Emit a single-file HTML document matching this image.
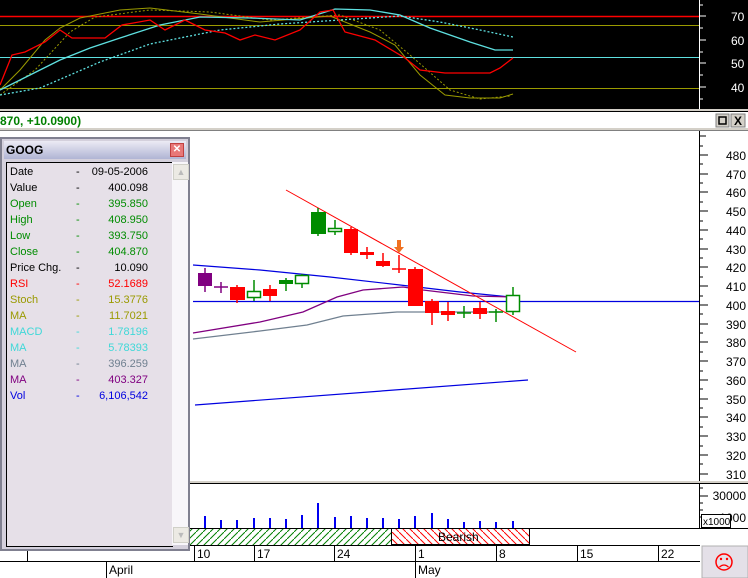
<!DOCTYPE html>
<html><head><meta charset="utf-8"><style>
body{margin:0;width:748px;height:578px;overflow:hidden;background:#fff;font-family:"Liberation Sans",sans-serif;}
svg{position:absolute;left:0;top:0}
#panel{position:absolute;left:0;top:137px;width:190px;height:414px;background:#d4d0dc;border:2px solid #808090;box-sizing:border-box}
#ttl{position:absolute;left:2px;top:2px;width:182px;height:18px;background:linear-gradient(#eceaf4,#b0b4d4);font:bold 12px "Liberation Sans",sans-serif;line-height:18px;padding-left:2px;box-sizing:border-box}
#cls{position:absolute;right:2px;top:2px;width:12px;height:12px;background:#e87878;border:1px solid #c04040;color:#fff;font:bold 10px sans-serif;text-align:center;line-height:12px}
#list{position:absolute;left:4px;top:23px;width:166px;height:383px;background:#e6e0e8;border:1px solid #000;border-right:none}
#sb{position:absolute;left:170px;top:23px;width:16px;height:383px;background:#f8f6fa}
.sbb{position:absolute;left:1px;width:14px;height:14px;background:#eceae4;border:1px solid #d0d0c8;color:#bbb;font-size:9px;text-align:center;line-height:14px}
.r{position:absolute;left:3px;width:160px;height:16px;font-size:11px;line-height:16px}
.r span{position:absolute}
.r .d{left:66px}.r .v{right:22px}
</style></head><body>
<svg width="748" height="578" viewBox="0 0 748 578" font-family="Liberation Sans, sans-serif">
<rect x="0" y="0" width="748" height="109" fill="#000"/>
<line x1="0" y1="16.5" x2="699" y2="16.5" stroke="#f00" stroke-width="1.5"/>
<line x1="0" y1="25.5" x2="699" y2="25.5" stroke="#9a9a00"/>
<line x1="0" y1="57.5" x2="699" y2="57.5" stroke="#5ee0e0"/>
<line x1="0" y1="88.5" x2="699" y2="88.5" stroke="#9a9a00"/>
<line x1="699.5" y1="0" x2="699.5" y2="109" stroke="#fff"/>
<g stroke="#fff"><line x1="699" y1="5" x2="703" y2="5"/><line x1="699" y1="16" x2="706" y2="16"/><line x1="699" y1="28" x2="703" y2="28"/><line x1="699" y1="40" x2="706" y2="40"/><line x1="699" y1="52" x2="703" y2="52"/><line x1="699" y1="63" x2="706" y2="63"/><line x1="699" y1="75" x2="703" y2="75"/><line x1="699" y1="87" x2="706" y2="87"/><line x1="699" y1="99" x2="703" y2="99"/></g>
<g fill="#fff" font-size="12"><text x="731" y="21">70</text><text x="731" y="45">60</text><text x="731" y="68">50</text><text x="731" y="92">40</text></g>
<polyline fill="none" stroke="#9a9a00" points="0,90 20,70 45,40 60,28 80,18 120,10 150,8 200,14 260,22 330,16 370,32 395,45 420,75 445,95 470,98 500,98 513,94"/>
<polyline fill="none" stroke="#9a9a00" stroke-dasharray="2,2" points="0,95 35,70 70,32 95,17 150,10 210,12 270,20 340,15 380,30 410,55 450,90 480,99 510,96"/>
<polyline fill="none" stroke="#5ee0e0" stroke-width="1.3" points="0,90 30,75 60,60 90,48 120,38 160,25 200,17 250,18 300,20 335,9 370,10 400,15 430,28 470,42 495,50 513,50"/>
<polyline fill="none" stroke="#5ee0e0" stroke-dasharray="2,2" stroke-width="1.3" points="0,95 40,88 100,62 150,44 220,30 280,24 340,20 400,16 440,22 480,30 513,37"/>
<polyline fill="none" stroke="#f00" stroke-width="1.3" points="0,85 12,55 25,52 45,42 60,30 72,38 105,38 122,25 150,20 165,30 185,20 205,30 225,33 240,40 255,35 275,40 300,30 320,12 333,10 345,32 375,40 405,58 420,70 445,73 490,73 500,68 513,58"/>
<rect x="0" y="109" width="748" height="2" fill="#d4d0c8"/>
<line x1="0" y1="111.5" x2="748" y2="111.5" stroke="#000"/>
<text x="0" y="125" font-size="12" font-weight="bold" fill="#008000">870, +10.0900)</text>
<rect x="716" y="114" width="13" height="13" fill="#d4d0c8" stroke="#808080"/><rect x="719" y="117" width="7" height="7" fill="none" stroke="#000" stroke-width="1.5"/>
<rect x="731" y="114" width="14" height="13" fill="#d4d0c8" stroke="#808080"/><text x="734" y="125" font-size="12" font-weight="bold">X</text>
<rect x="0" y="128" width="748" height="2" fill="#d4d0c8"/>
<line x1="0" y1="130.5" x2="748" y2="130.5" stroke="#808080"/>
<line x1="699.5" y1="131" x2="699.5" y2="528" stroke="#000"/>
<g stroke="#000">
<line x1="699" y1="136" x2="706" y2="136"/><line x1="699" y1="146" x2="703" y2="146"/><line x1="699" y1="155" x2="708" y2="155"/><line x1="699" y1="164" x2="703" y2="164"/><line x1="699" y1="174" x2="708" y2="174"/><line x1="699" y1="183" x2="703" y2="183"/><line x1="699" y1="192" x2="708" y2="192"/><line x1="699" y1="202" x2="703" y2="202"/><line x1="699" y1="211" x2="708" y2="211"/><line x1="699" y1="221" x2="703" y2="221"/><line x1="699" y1="230" x2="708" y2="230"/><line x1="699" y1="239" x2="703" y2="239"/><line x1="699" y1="249" x2="708" y2="249"/><line x1="699" y1="258" x2="703" y2="258"/><line x1="699" y1="267" x2="708" y2="267"/><line x1="699" y1="277" x2="703" y2="277"/><line x1="699" y1="286" x2="708" y2="286"/><line x1="699" y1="296" x2="703" y2="296"/><line x1="699" y1="305" x2="708" y2="305"/><line x1="699" y1="314" x2="703" y2="314"/><line x1="699" y1="324" x2="708" y2="324"/><line x1="699" y1="333" x2="703" y2="333"/><line x1="699" y1="342" x2="708" y2="342"/><line x1="699" y1="352" x2="703" y2="352"/><line x1="699" y1="361" x2="708" y2="361"/><line x1="699" y1="371" x2="703" y2="371"/><line x1="699" y1="380" x2="708" y2="380"/><line x1="699" y1="389" x2="703" y2="389"/><line x1="699" y1="399" x2="708" y2="399"/><line x1="699" y1="408" x2="703" y2="408"/><line x1="699" y1="417" x2="708" y2="417"/><line x1="699" y1="427" x2="703" y2="427"/><line x1="699" y1="436" x2="708" y2="436"/><line x1="699" y1="446" x2="703" y2="446"/><line x1="699" y1="455" x2="708" y2="455"/><line x1="699" y1="464" x2="703" y2="464"/><line x1="699" y1="474" x2="708" y2="474"/>
</g>
<g font-size="12" fill="#000" text-anchor="end">
<text x="746" y="160">480</text><text x="746" y="179">470</text><text x="746" y="197">460</text><text x="746" y="216">450</text><text x="746" y="235">440</text><text x="746" y="254">430</text><text x="746" y="272">420</text><text x="746" y="291">410</text><text x="746" y="310">400</text><text x="746" y="329">390</text><text x="746" y="347">380</text><text x="746" y="366">370</text><text x="746" y="385">360</text><text x="746" y="404">350</text><text x="746" y="422">340</text><text x="746" y="441">330</text><text x="746" y="460">320</text><text x="746" y="479">310</text>
</g>
<rect x="0" y="481" width="748" height="2" fill="#d4d0c8"/>
<line x1="0" y1="483.5" x2="748" y2="483.5" stroke="#000"/>
<line x1="193" y1="301.5" x2="699" y2="301.5" stroke="#0000e0" stroke-width="1.2"/>
<polyline fill="none" stroke="#0000e0" stroke-width="1.2" points="193,265 260,270 330,277 400,285 460,292 520,298"/>
<polyline fill="none" stroke="#0000e0" stroke-width="1.2" points="195,405 528,380"/>
<polyline fill="none" stroke="#800080" stroke-width="1.3" points="193,333 260,322 303,312 337,297 363,290 403,287 423,290 473,296 513,297"/>
<polyline fill="none" stroke="#708090" stroke-width="1.3" points="193,339 260,331 307,325 343,316 397,312 503,312"/>
<line x1="286" y1="190" x2="576" y2="352" stroke="#f00"/>
<g stroke-width="1.5">
<line x1="205" y1="268" x2="205" y2="292" stroke="#800080"/><rect x="198" y="273" width="14" height="13" fill="#800080"/>
<line x1="221" y1="282" x2="221" y2="293" stroke="#800080"/><line x1="214" y1="287" x2="228" y2="287" stroke="#800080"/>
<line x1="237" y1="285" x2="237" y2="303" stroke="#f00"/><rect x="230" y="287" width="15" height="13" fill="#f00"/>
<line x1="254" y1="280" x2="254" y2="301" stroke="#008c00"/><rect x="247.5" y="291.5" width="13" height="6" fill="#fff" stroke="#008c00"/>
<line x1="270" y1="285" x2="270" y2="301" stroke="#f00"/><rect x="263" y="289" width="14" height="7" fill="#f00"/>
<line x1="286" y1="278" x2="286" y2="291" stroke="#008c00"/><rect x="279" y="280" width="14" height="4" fill="#008c00"/>
<line x1="302" y1="274" x2="302" y2="288" stroke="#008c00"/><rect x="295.5" y="275.5" width="13" height="8" fill="#fff" stroke="#008c00"/>
<line x1="318" y1="208" x2="318" y2="236" stroke="#008c00"/><rect x="311" y="212" width="15" height="22" fill="#008c00"/>
<line x1="335" y1="220" x2="335" y2="235" stroke="#008c00"/><rect x="328.5" y="228.5" width="13" height="3" fill="#fff" stroke="#008c00"/>
<line x1="351" y1="227" x2="351" y2="255" stroke="#f00"/><rect x="344" y="229" width="14" height="24" fill="#f00"/>
<line x1="367" y1="247" x2="367" y2="259" stroke="#f00"/><rect x="360" y="252" width="14" height="3" fill="#f00"/>
<line x1="383" y1="253" x2="383" y2="267" stroke="#f00"/><rect x="376" y="261" width="14" height="5" fill="#f00"/>
<line x1="399" y1="255" x2="399" y2="273" stroke="#f00"/><line x1="392" y1="269" x2="406" y2="269" stroke="#f00"/>
<line x1="415" y1="267" x2="415" y2="306" stroke="#f00"/><rect x="408" y="269" width="15" height="37" fill="#f00"/>
<line x1="432" y1="299" x2="432" y2="325" stroke="#f00"/><rect x="425" y="301" width="14" height="12" fill="#f00"/>
<line x1="448" y1="302" x2="448" y2="321" stroke="#f00"/><rect x="441" y="311" width="14" height="4" fill="#f00"/>
<line x1="464" y1="306" x2="464" y2="318" stroke="#008c00"/><line x1="457" y1="313" x2="471" y2="313" stroke="#008c00"/>
<line x1="480" y1="302" x2="480" y2="319" stroke="#f00"/><rect x="473" y="308" width="14" height="6" fill="#f00"/>
<line x1="496" y1="309" x2="496" y2="322" stroke="#008c00"/><line x1="489" y1="312" x2="503" y2="312" stroke="#008c00"/>
<line x1="513" y1="287" x2="513" y2="315" stroke="#008c00"/><rect x="506.5" y="295.5" width="13" height="16" fill="#fff" stroke="#008c00"/>
</g>
<path d="M397 240h4v7h3l-5 6-5-6h3z" fill="#f07020"/>
<g stroke="#000"><line x1="699" y1="488" x2="703" y2="488"/><line x1="699" y1="496" x2="708" y2="496"/><line x1="699" y1="503" x2="703" y2="503"/><line x1="699" y1="510" x2="703" y2="510"/><line x1="699" y1="517" x2="708" y2="517"/></g>
<text x="746" y="500" font-size="12" text-anchor="end">30000</text>
<text x="746" y="522" font-size="12" text-anchor="end">1000</text>
<rect x="701.5" y="514.5" width="29" height="13" fill="#fff" stroke="#000"/><text x="703" y="525" font-size="10">x1000</text>
<g stroke="#0000f0" stroke-width="2">
<line x1="205" y1="528" x2="205" y2="516"/><line x1="221" y1="528" x2="221" y2="520"/><line x1="237" y1="528" x2="237" y2="520"/><line x1="254" y1="528" x2="254" y2="518"/><line x1="270" y1="528" x2="270" y2="518"/><line x1="286" y1="528" x2="286" y2="519"/><line x1="302" y1="528" x2="302" y2="515"/><line x1="318" y1="528" x2="318" y2="503"/><line x1="335" y1="528" x2="335" y2="517"/><line x1="351" y1="528" x2="351" y2="516"/><line x1="367" y1="528" x2="367" y2="518"/><line x1="383" y1="528" x2="383" y2="518"/><line x1="399" y1="528" x2="399" y2="519"/><line x1="415" y1="528" x2="415" y2="516"/><line x1="432" y1="528" x2="432" y2="513"/><line x1="448" y1="528" x2="448" y2="519"/><line x1="464" y1="528" x2="464" y2="522"/><line x1="480" y1="528" x2="480" y2="521"/><line x1="496" y1="528" x2="496" y2="522"/><line x1="513" y1="528" x2="513" y2="521"/>
</g>
<defs>
<pattern id="hg" width="7" height="7" patternUnits="userSpaceOnUse"><line x1="0" y1="7" x2="7" y2="0" stroke="#008000"/></pattern>
<pattern id="hr" width="7" height="7" patternUnits="userSpaceOnUse"><line x1="0" y1="0" x2="7" y2="7" stroke="#f00"/></pattern>
</defs>
<line x1="0" y1="528.5" x2="748" y2="528.5" stroke="#000"/>
<rect x="190" y="529" width="201" height="16" fill="url(#hg)"/>
<rect x="391.5" y="528.5" width="138" height="16" fill="url(#hr)" stroke="#000"/>
<text x="438" y="541" font-size="12">Bearish</text>
<line x1="0" y1="545.5" x2="700" y2="545.5" stroke="#000"/>
<line x1="0" y1="561.5" x2="700" y2="561.5" stroke="#000"/>
<g stroke="#000"><line x1="194.5" y1="545" x2="194.5" y2="561"/><line x1="254.5" y1="545" x2="254.5" y2="561"/><line x1="334.5" y1="545" x2="334.5" y2="561"/><line x1="415.5" y1="545" x2="415.5" y2="578"/><line x1="496.5" y1="545" x2="496.5" y2="561"/><line x1="577.5" y1="545" x2="577.5" y2="561"/><line x1="658.5" y1="545" x2="658.5" y2="561"/><line x1="106.5" y1="561" x2="106.5" y2="578"/><line x1="27.5" y1="545" x2="27.5" y2="561"/></g>
<g font-size="12"><text x="197" y="558">10</text><text x="257" y="558">17</text><text x="337" y="558">24</text><text x="418" y="558">1</text><text x="499" y="558">8</text><text x="580" y="558">15</text><text x="661" y="558">22</text><text x="109" y="574">April</text><text x="418" y="574">May</text></g>
<rect x="702" y="546" width="46" height="32" fill="#e4e0e8" stroke="#b0b0b0"/>
<circle cx="724" cy="562" r="8" fill="none" stroke="#f00" stroke-width="1.5"/>
<circle cx="721" cy="559" r="1.2" fill="#f00"/><circle cx="727" cy="559" r="1.2" fill="#f00"/>
<path d="M719.5 567q4.5-4 9 0" fill="none" stroke="#f00" stroke-width="1.3"/>
</svg>
<div id="panel">
<div id="ttl">GOOG<div id="cls">✕</div></div>
<div id="list">
<div class="r" style="top:1px;color:#000"><span>Date</span><span class="d">-</span><span class="v">09-05-2006</span></div>
<div class="r" style="top:17px;color:#000"><span>Value</span><span class="d">-</span><span class="v">400.098</span></div>
<div class="r" style="top:33px;color:#008c00"><span>Open</span><span class="d">-</span><span class="v">395.850</span></div>
<div class="r" style="top:49px;color:#008c00"><span>High</span><span class="d">-</span><span class="v">408.950</span></div>
<div class="r" style="top:65px;color:#008c00"><span>Low</span><span class="d">-</span><span class="v">393.750</span></div>
<div class="r" style="top:81px;color:#008c00"><span>Close</span><span class="d">-</span><span class="v">404.870</span></div>
<div class="r" style="top:97px;color:#000"><span>Price Chg.</span><span class="d">-</span><span class="v">10.090</span></div>
<div class="r" style="top:113px;color:#f00"><span>RSI</span><span class="d">-</span><span class="v">52.1689</span></div>
<div class="r" style="top:129px;color:#9a9a00"><span>Stoch</span><span class="d">-</span><span class="v">15.3776</span></div>
<div class="r" style="top:145px;color:#9a9a00"><span>MA</span><span class="d">-</span><span class="v">11.7021</span></div>
<div class="r" style="top:161px;color:#40d8d8"><span>MACD</span><span class="d">-</span><span class="v">1.78196</span></div>
<div class="r" style="top:177px;color:#40d8d8"><span>MA</span><span class="d">-</span><span class="v">5.78393</span></div>
<div class="r" style="top:193px;color:#708090"><span>MA</span><span class="d">-</span><span class="v">396.259</span></div>
<div class="r" style="top:209px;color:#800080"><span>MA</span><span class="d">-</span><span class="v">403.327</span></div>
<div class="r" style="top:225px;color:#0000e0"><span>Vol</span><span class="d">-</span><span class="v">6,106,542</span></div>
</div>
<div id="sb"><div class="sbb" style="top:2px">▲</div><div class="sbb" style="bottom:2px">▼</div></div>
</div>
</body></html>
